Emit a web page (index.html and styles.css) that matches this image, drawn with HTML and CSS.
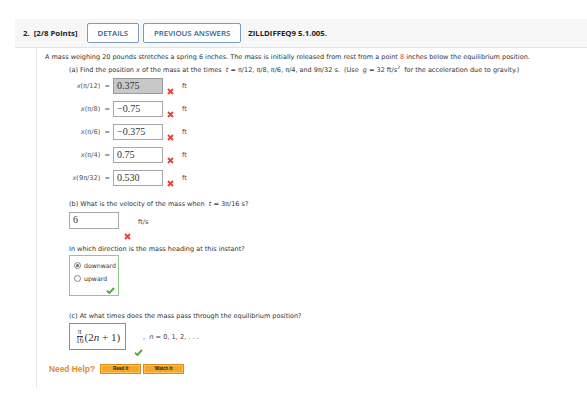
FILE: index.html
```html
<!DOCTYPE html>
<html>
<head>
<meta charset="utf-8">
<link rel="stylesheet" href="styles.css">
</head>
<body>
<div class="header">
  <span class="qnum">2.</span>
  <span class="pts">[2/8 Points]</span>
  <span class="btn btn-first">DETAILS</span>
  <span class="btn">PREVIOUS ANSWERS</span>
  <span class="code">ZILLDIFFEQ9 5.1.005.</span>
</div>
<div class="content">
  <p class="intro">A mass weighing 20 pounds stretches a spring 6 inches. The mass is initially released from rest from a point <span class="red">8</span> inches below the equilibrium position.</p>
  <div class="part">
    <p class="q">(a) Find the position <i>x</i> of the mass at the times &nbsp;<i>t</i> = π/12, π/8, π/6, π/4, and 9π/32 s. &nbsp;(Use &nbsp;<i>g</i> = 32 ft/s<sup>2</sup> &nbsp;for the acceleration due to gravity.)</p>
    <div class="rows">
      <div class="row">
        <span class="lbl"><i>x</i>(π/12) &nbsp;=</span>
        <span class="inp inp-gray">0.375</span>
        <span class="mark mark-a"><svg width="7" height="7" viewBox="0 0 7 7"><path d="M1 1L6 6M6 1L1 6" stroke="#e5433d" stroke-width="1.9" fill="none"/></svg></span>
        <span class="unit">ft</span>
      </div>
      <div class="row">
        <span class="lbl"><i>x</i>(π/8) &nbsp;=</span>
        <span class="inp">−0.75</span>
        <span class="mark mark-a"><svg width="7" height="7" viewBox="0 0 7 7"><path d="M1 1L6 6M6 1L1 6" stroke="#e5433d" stroke-width="1.9" fill="none"/></svg></span>
        <span class="unit">ft</span>
      </div>
      <div class="row">
        <span class="lbl"><i>x</i>(π/6) &nbsp;=</span>
        <span class="inp">−0.375</span>
        <span class="mark mark-a"><svg width="7" height="7" viewBox="0 0 7 7"><path d="M1 1L6 6M6 1L1 6" stroke="#e5433d" stroke-width="1.9" fill="none"/></svg></span>
        <span class="unit">ft</span>
      </div>
      <div class="row">
        <span class="lbl"><i>x</i>(π/4) &nbsp;=</span>
        <span class="inp">0.75</span>
        <span class="mark mark-a"><svg width="7" height="7" viewBox="0 0 7 7"><path d="M1 1L6 6M6 1L1 6" stroke="#e5433d" stroke-width="1.9" fill="none"/></svg></span>
        <span class="unit">ft</span>
      </div>
      <div class="row">
        <span class="lbl"><i>x</i>(9π/32) &nbsp;=</span>
        <span class="inp">0.530</span>
        <span class="mark mark-a"><svg width="7" height="7" viewBox="0 0 7 7"><path d="M1 1L6 6M6 1L1 6" stroke="#e5433d" stroke-width="1.9" fill="none"/></svg></span>
        <span class="unit">ft</span>
      </div>
    </div>
  </div>
  <div class="part part-b">
    <p class="q">(b) What is the velocity of the mass when &nbsp;<i>t</i> = 3π/16 s?</p>
    <div class="row row-b">
      <span class="inp">6</span>
      <span class="mark mark-b"><svg width="7" height="7" viewBox="0 0 7 7"><path d="M1 1L6 6M6 1L1 6" stroke="#e5433d" stroke-width="1.9" fill="none"/></svg></span>
      <span class="unit unit-b">ft/s</span>
    </div>
    <p class="q q-dir">In which direction is the mass heading at this instant?</p>
    <div class="radios">
      <div class="opt"><span class="radio radio-on"></span>downward</div>
      <div class="opt"><span class="radio"></span>upward</div>
      <div class="check-row"><svg width="9" height="7" viewBox="0 0 9 7"><path d="M1 3.8L3.4 6L8 1" stroke="#5ba446" stroke-width="1.9" fill="none"/></svg></div>
    </div>
  </div>
  <div class="part part-c">
    <p class="q">(c) At what times does the mass pass through the equilibrium position?</p>
    <div class="row crow">
      <span class="inp ansbox">
        <span class="frac"><span class="num">π</span><span class="den">16</span></span>
        <span class="paren">(2<i>n</i> + 1)</span>
      </span>
      <span class="mark mark-c"><svg width="9" height="7" viewBox="0 0 9 7"><path d="M1 3.8L3.4 6L8 1" stroke="#5ba446" stroke-width="1.9" fill="none"/></svg></span>
      <span class="nseq">, &nbsp;<i>n</i> = 0, 1, 2, . . .</span>
    </div>
  </div>
  <div class="help">
    <span class="need">Need Help?</span>
    <span class="hbtn">Read It</span>
    <span class="hbtn">Watch It</span>
  </div>
</div>
</body>
</html>
```
FILE: styles.css
```css
body {
  margin: 0;
  background: #fff;
  font-family: "DejaVu Sans", Verdana, sans-serif;
  color: #333;
}
p { margin: 0; }

.header {
  margin: 19px 0 0 15px;
  height: 28px;
  background: #f7f7f7;
  border-bottom: 1px solid #e3e3e3;
  display: flex;
  align-items: center;
  padding-left: 8px;
  font-family: "Open Sans", sans-serif;
  font-weight: 700;
  font-size: 7.8px;
  color: #222;
}
.qnum { margin-right: 4px; }
.btn {
  height: 20px;
  box-sizing: border-box;
  display: flex;
  align-items: center;
  padding: 0 10px;
  border: 1px solid #7b9dbb;
  border-radius: 2px;
  background: #fff;
  color: #2f5f8d;
  font-weight: 600;
  margin-left: 4px;
}
.btn-first { margin-left: 9px; }
.code { margin-left: 7px; }

.content {
  margin-left: 36px;
  border-left: 1px solid #e6e6e6;
  padding: 4px 0 14px 8px;
  font-size: 6.5px;
  line-height: 10px;
}
.red { color: #e0322d; }
.part { margin-left: 24px; }
.q { margin-top: 3px; }
.q sup { font-size: 4.5px; line-height: 0; vertical-align: 3px; }

.rows {
  margin-top: 3px;
  display: flex;
  flex-direction: column;
  gap: 7px;
}
.row {
  display: flex;
  align-items: center;
  height: 16px;
}
.lbl {
  flex: none;
  width: 41px;
  text-align: right;
  color: #555;
  margin-right: 3px;
  font-size: 6.6px;
  white-space: nowrap;
}
.inp {
  flex: none;
  width: 50px;
  height: 16px;
  box-sizing: border-box;
  border: 1px solid #a8a8a8;
  background: #fff;
  font-family: "Liberation Serif", serif;
  font-size: 10px;
  line-height: 14px;
  padding-left: 3px;
  color: #333;
}
.inp-gray { background: #c8c8c8; border-color: #9a9a9a; }
.mark { display: flex; }
.mark-a { align-self: flex-end; margin: 0 0 -1px 4px; }
.unit { margin-left: 8px; align-self: flex-start; margin-top: 3px; color: #444; }

.part-b .q { margin-top: 13px; }
.row-b { margin-top: 3px; height: 17px; }
.row-b .inp { height: 17px; width: 50px; }
.mark-b { align-self: flex-end; margin: 0 0 -11px 5px; }
.unit-b { margin-left: 7px; margin-top: 5px; }
.q-dir { margin-top: 15px !important; }

.radios {
  margin-top: 1px;
  width: 50px;
  height: 41px;
  box-sizing: border-box;
  border: 1px solid #92c98a;
  padding: 3px 0 0 4px;
  display: flex;
  flex-direction: column;
  font-size: 6.2px;
}
.opt {
  display: flex;
  align-items: center;
  height: 13px;
  color: #333;
}
.radio {
  width: 5px;
  height: 5px;
  border: 1px solid #888;
  border-radius: 50%;
  margin-right: 3px;
  background: #fff;
  display: flex;
  align-items: center;
  justify-content: center;
}
.radio-on::after {
  content: "";
  width: 3px;
  height: 3px;
  border-radius: 50%;
  background: #666;
}
.check-row { display: flex; justify-content: flex-end; padding-right: 3px; margin-top: 2px; }

.part-c .q { margin-top: 15px; }
.crow {
  margin-top: 2px;
  height: 27px;
}
.ansbox {
  width: 57px;
  height: 27px;
  display: flex;
  align-items: center;
  padding-left: 6px;
  border: 1px solid #8f8f8f;
}
.frac {
  display: flex;
  flex-direction: column;
  align-items: center;
  font-size: 7.5px;
  line-height: 8px;
  margin-right: 1px;
}
.frac .num { border-bottom: 1px solid #444; padding: 0 1px; }
.paren { font-size: 11px; white-space: nowrap; }
.mark-c { align-self: flex-end; margin: 0 0 -6px 8px; }
.nseq { font-size: 6.6px; color: #444; white-space: nowrap; }

.help {
  margin-top: 14px;
  margin-left: 4px;
  display: flex;
  align-items: center;
  gap: 2px;
}
.need {
  font-family: "Liberation Sans", Arial, sans-serif;
  font-weight: 700;
  font-size: 8.4px;
  color: #e8891b;
  margin-right: 3px;
}
.hbtn {
  width: 41px;
  height: 10px;
  box-sizing: border-box;
  background: #f6a626;
  border: 1px solid #d88a1c;
  box-shadow: inset 0 0 0 1px #fbc35e;
  font-family: "Liberation Sans", Arial, sans-serif;
  font-weight: 700;
  font-size: 4.6px;
  line-height: 8px;
  text-align: center;
  color: #222;
}
```
